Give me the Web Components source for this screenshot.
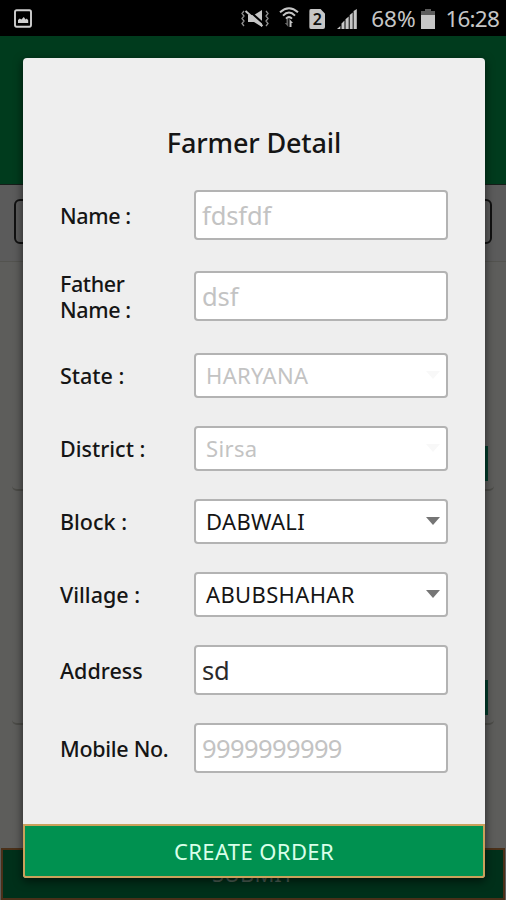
<!DOCTYPE html>
<html lang="en">
<head>
<meta charset="utf-8">
<title>Farmer Detail</title>
<style>
  html, body { margin: 0; height: 100%; overflow: hidden; background: #000; }
  body { font-family: "Noto Sans", "Open Sans", sans-serif; }
</style>
</head>
<body>
<farmer-app></farmer-app>

<script>
// shared base: clones html + style into an open shadow root
class BaseElement extends HTMLElement {
  constructor() {
    super();
    this.attachShadow({ mode: 'open' });
    const template = document.createElement('template');
    template.innerHTML = `${this.style_}${this.html}`;
    this.shadowRoot.appendChild(template.content.cloneNode(true));
  }
}

class StatusBar extends BaseElement {
  get html() { return `
    <svg class="shot" width="20" height="20" viewBox="0 0 20 20">
      <rect x="2" y="1.300" width="16" height="16.4" rx="1.6" fill="none" stroke="#d0d0d0" stroke-width="1.9"/>
      <path d="M5 14v-3l1.800-1.600 1.600 1 2.400-2.400 1.800 2.400 1.200-.8 1.400 1.600V14z" fill="#d0d0d0"/>
    </svg>
    <span class="gap"></span>
    <svg class="mute" width="28" height="22" viewBox="0 0 28 22">
      <path d="M3 3l-2 2.5 2 2.5-2 2.500 2 2.500-2 2.500 2 2.500M25 3l2 2.500-2 2.500 2 2.500-2 2.500 2 2.500-2 2.500" fill="none" stroke="#8f8f8f" stroke-width="1.300"/>
      <path d="M7 7h6l8-5v17l-8-5H7z" fill="#c6c6c6"/>
      <path d="M6 1l17 15" stroke="#000" stroke-width="2"/>
      <path d="M4.500 3l17 15" stroke="#c6c6c6" stroke-width="2"/>
    </svg>
    <svg class="wifi" width="20" height="22" viewBox="0 0 20 22">
      <g fill="none" stroke="#c6c6c6" stroke-width="2">
        <path d="M1 6.200Q10-1.800 19 6.200"/>
        <path d="M4 9.600Q10 3.600 16 9.600"/>
        <path d="M7 12.600Q10 9.600 13 12.600"/>
      </g>
      <path d="M9.300 13v8L5.800 17h1.700v-4z" fill="#666"/>
      <path d="M10.500 21v-8l3.500 4h-1.500v4z" fill="#c6c6c6"/>
    </svg>
    <span class="sim">2</span>
    <svg class="signal" width="20" height="20" viewBox="0 0 20 20">
      <path d="M0 20l3.400-3V20zM4.500 20v-5.500l3-3V20zM8.500 20V10.200l3.200-2.800V20zM12.700 20V6l3-2.600V20zM16.600 20V2L19.800 0v20z" fill="#c6c6c6"/>
    </svg>
    <span class="pct">68%</span>
    <svg class="batt" width="14" height="20" viewBox="0 0 14 20">
      <path d="M0 2h4V0h6v2h4v5H0z" fill="#5c5c5c"/>
      <path d="M0 6h14v14H0z" fill="#c6c6c6"/>
    </svg>
    <span class="time">16:28</span>
  `}
  get style_() { return `
    <style>
      :host {
        display: flex;
        align-items: center;
        height: 36px;
        box-sizing: border-box;
        padding: 2px 7px 0 13px;
        background: #000;
        color: #c6c6c6;
        font-size: 22.500px;
        line-height: 34px;
      }
      svg { display: block; flex: none; }
      .gap { flex: 1; }
      .mute { margin-right: 10px; }
      .wifi { margin-right: 10px; margin-top: -5px; }
      .sim {
        width: 16px; height: 20px; margin-right: 12px;
        background: #c6c6c6; color: #111;
        font-size: 16px; font-weight: 600; line-height: 20px; text-align: center;
        clip-path: polygon(0 0, 70% 0, 100% 25%, 100% 100%, 0 100%);
        border-radius: 2px;
      }
      .signal { margin-right: 14px; }
      .pct { letter-spacing: -.1px; margin-right: 6px; }
      .batt { margin-right: 10px; }
      .time { letter-spacing: -.8px; }
    </style>
  `}
}
customElements.define('status-bar', StatusBar);

// dimmed order screen that sits behind the dialog
class OrderScreen extends BaseElement {
  get html() { return `
    <div class="head"></div>
    <div class="search"><div class="box"></div></div>
    <div class="list">
      <div class="card"><i></i></div>
      <div class="card"><i></i></div>
    </div>
    <div class="submit">SUBMIT</div>
  `}
  get style_() { return `
    <style>
      :host { display: flex; flex-direction: column; flex: 1; background: #5d5d5b; }
      .head { height: 148px; background: #003b1d; border-bottom: 1px solid #161d19; }
      .search {
        height: 77px; box-sizing: border-box; padding: 14px 14px 0;
        background: #5b5b5b; border-bottom: 1px solid #53534f;
      }
      .box { height: 45px; box-sizing: border-box; border: 2px solid #111; border-radius: 6px; }
      .list { flex: 1; padding: 28px 12px 0; }
      .card {
        height: 201px; margin-bottom: 33px; box-sizing: border-box; padding-top: 156px;
        border-bottom: 2px solid #4c4c48; border-radius: 5px;
      }
      .card i { display: block; width: 120px; height: 35px; margin: 0 6px 0 auto; background: #003c2a; }
      .submit {
        height: 52px; box-sizing: border-box; margin: 0 1px;
        border: 2px solid #4a3019; background: #00301a;
        color: #4d5f54; font-size: 22px; line-height: 47px; text-align: center;
      }
    </style>
  `}
}
customElements.define('order-screen', OrderScreen);

// one label + control line, kind = text | select
class FormRow extends BaseElement {
  get html() { return `
    <div class="label"><slot name="label"></slot></div>
    <div class="field"><span><slot></slot></span><b></b></div>
  `}
  get style_() { return `
    <style>
      :host { display: grid; grid-template: 100% / 134px 254px; align-items: center; height: 50px; }
      .label {
        padding-top: 2px; color: #151515;
        font-size: 21.5px; font-weight: 550; line-height: 26px;
        letter-spacing: var(--label-gap, 0px); white-space: nowrap;
      }
      .field {
        display: flex; align-items: center; justify-content: space-between;
        height: 100%; box-sizing: border-box; padding: 0 7px 1px 6px;
        background: #fff; border: 2px solid #b3b3b3; border-radius: 4px;
        color: #2a2a2a; font-size: 25.500px; white-space: nowrap;
        letter-spacing: var(--text-gap, -.1px);
      }
      :host([kind=select]) { height: 45px; }
      :host([kind=select]) .label { padding-top: 1px; }
      :host([kind=select]) .field {
        padding: 0 6px 1px 10px; font-size: 22px; color: #151515; letter-spacing: .35px;
      }
      :host([kind=select]) b {
        border: 7px solid transparent; border-top: 8px solid #757575; border-bottom: 0;
      }
      :host([disabled]) .field { color: #c3c3c3; }
      :host([disabled][kind=select]) b { border-top-color: #f8f8f8; }
    </style>
  `}
}
customElements.define('form-row', FormRow);

class FarmerDialog extends BaseElement {
  get html() { return `
    <h1><slot name="title"></slot></h1>
    <div class="rows"><slot></slot></div>
    <button><slot name="action"></slot></button>
  `}
  get style_() { return `
    <style>
      :host {
        display: flex; flex-direction: column; box-sizing: border-box;
        background: #eee; border-radius: 4px;
        box-shadow: 0 3px 9px 1px rgba(0, 0, 0, .5);
      }
      h1 {
        margin: 66px 0 27px; height: 39px; line-height: 38px; text-align: center;
        font-size: 27px; font-weight: 500; letter-spacing: -.15px; color: #151515;
      }
      .rows { display: flex; flex-direction: column; gap: 28px; padding-left: 37px; }
      button {
        height: 54px; margin: auto 0 0; padding: 0;
        background: #009150; border: 2px solid #c9a15b; border-radius: 0 0 3px 3px;
        color: #d9ffe9; font-family: inherit; font-size: 22px; letter-spacing: .4px;
      }
    </style>
  `}
}
customElements.define('farmer-dialog', FarmerDialog);

class FarmerApp extends BaseElement {
  get html() { return `
    <status-bar></status-bar>
    <order-screen></order-screen>
    <farmer-dialog>
      <span slot="title">Farmer Detail</span>
      <form-row disabled class="name"><span slot="label">Name :</span>fdsfdf</form-row>
      <form-row disabled class="father"><span slot="label">Father<br>Name :</span>dsf</form-row>
      <form-row kind="select" disabled><span slot="label">State :</span>HARYANA</form-row>
      <form-row kind="select" disabled><span slot="label">District :</span>Sirsa</form-row>
      <form-row kind="select"><span slot="label">Block :</span>DABWALI</form-row>
      <form-row kind="select"><span slot="label">Village :</span>ABUBSHAHAR</form-row>
      <form-row><span slot="label">Address</span>sd</form-row>
      <form-row disabled class="mobile"><span slot="label">Mobile No.</span>9999999999</form-row>
      <span slot="action">CREATE ORDER</span>
    </farmer-dialog>
  `}
  get style_() { return `
    <style>
      :host { display: flex; flex-direction: column; position: relative; width: 506px; height: 900px; }
      farmer-dialog { position: absolute; left: 23px; top: 58px; width: 462px; height: 820px; }
      .name, .father { --label-gap: -.4px; }
      .father { margin: 3px 0 4px; }
      .mobile { --label-gap: -.3px; --text-gap: -.6px; }
    </style>
  `}
}
customElements.define('farmer-app', FarmerApp);
</script>
</body>
</html>
